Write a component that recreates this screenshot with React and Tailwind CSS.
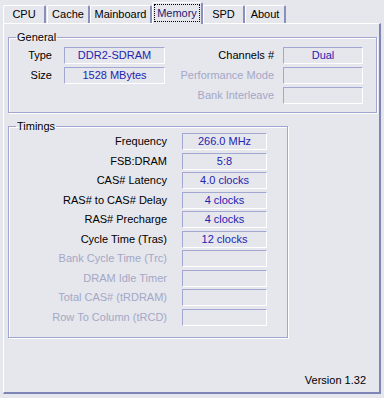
import React from 'react';

const Field = ({ value, w }) => (
    <div
        className={`${w} h-[17px] border-t border-l border-[#a3a8d2] border-r border-b border-r-white border-b-white flex items-center justify-center text-[#2424b0] leading-none`}
    >
        {value}
    </div>
);

const timings = [
    ['Frequency', '266.0 MHz'],
    ['FSB:DRAM', '5:8'],
    ['CAS# Latency', '4.0 clocks'],
    ['RAS# to CAS# Delay', '4 clocks'],
    ['RAS# Precharge', '4 clocks'],
    ['Cycle Time (Tras)', '12 clocks'],
    ['Bank Cycle Time (Trc)', null],
    ['DRAM Idle Timer', null],
    ['Total CAS# (tRDRAM)', null],
    ['Row To Column (tRCD)', null],
];

const App = () => {
    return (
        <div
            className="w-[384px] h-[398px] bg-[#e6e6ed] text-[11px] text-black overflow-hidden"
            style={{ fontFamily: '"Liberation Sans", Arial, sans-serif' }}
        >
            {/* tabs */}
            <div className="h-[23px] flex items-end pl-[3px]">
                <div className="w-[43px] h-[18px] border-t border-l border-white border-r-2 border-r-[#8a90bc] rounded-t-[2px] flex items-center justify-center">CPU</div>
                <div className="ml-[1px] w-[43px] h-[18px] border-t border-l border-white border-r-2 border-r-[#8a90bc] rounded-t-[2px] flex items-center justify-center">Cache</div>
                <div className="w-[62px] h-[18px] border-t border-l border-white border-r-2 border-r-[#8a90bc] rounded-t-[2px] flex items-center justify-center">Mainboard</div>
                <div className="relative z-10 -mb-px w-[51px] h-[22px] bg-[#e6e6ed] border-t border-l border-white border-r-2 border-r-[#8a90bc] rounded-t-[2px] flex items-start justify-center pt-[1px]">
                    <span className="border border-dotted border-black px-[2px] h-[18px] flex items-center text-[#1a1a70]">Memory</span>
                </div>
                <div className="w-[42px] h-[18px] border-t border-l border-white border-r-2 border-r-[#8a90bc] rounded-t-[2px] flex items-center justify-center">SPD</div>
                <div className="w-[41px] h-[18px] border-t border-l border-white border-r-2 border-r-[#8a90bc] rounded-t-[2px] flex items-center justify-center">About</div>
            </div>

            {/* panel */}
            <div className="ml-[3px] w-[378px] h-[371px] border-t border-l border-white border-r-2 border-b-2 border-r-[#7d84b6] border-b-[#7d84b6] flex flex-col pl-[4px]">
                <fieldset className="mt-[6px] w-[369px] border border-[#a0a6d0] shadow-[1px_1px_0_white,inset_1px_1px_0_white] pb-[8px]">
                    <legend className="ml-[7px] px-[1px] leading-[14px]">General</legend>
                    <div className="pt-[3px] flex flex-col gap-[3px]">
                        <div className="flex items-center">
                            <div className="w-[43px] text-right">Type</div>
                            <div className="ml-[12px]"><Field value="DDR2-SDRAM" w="w-[101px]" /></div>
                            <div className="w-[109px] text-right">Channels #</div>
                            <div className="ml-[9px]"><Field value="Dual" w="w-[80px]" /></div>
                        </div>
                        <div className="flex items-center">
                            <div className="w-[43px] text-right">Size</div>
                            <div className="ml-[12px]"><Field value="1528 MBytes" w="w-[101px]" /></div>
                            <div className="w-[109px] text-right text-[#a3a8c6]">Performance Mode</div>
                            <div className="ml-[9px]"><Field value="" w="w-[80px]" /></div>
                        </div>
                        <div className="flex items-center">
                            <div className="w-[265px] text-right text-[#a3a8c6]">Bank Interleave</div>
                            <div className="ml-[9px]"><Field value="" w="w-[80px]" /></div>
                        </div>
                    </div>
                </fieldset>

                <fieldset className="mt-[6px] w-[280px] border border-[#a0a6d0] shadow-[1px_1px_0_white,inset_1px_1px_0_white] pb-[11px]">
                    <legend className="ml-[7px] px-[1px] leading-[14px]">Timings</legend>
                    <div className="flex flex-col gap-[2.5px]">
                        {timings.map(([label, value]) => (
                            <div key={label} className="flex items-center">
                                <div className={`w-[158px] text-right ${value ? 'text-black' : 'text-[#a3a8c6]'}`}>{label}</div>
                                <div className="ml-[15px]"><Field value={value || ''} w="w-[85px]" /></div>
                            </div>
                        ))}
                    </div>
                </fieldset>

                <div className="mt-auto text-right pr-[13px] pb-[5px] leading-[13px]">Version 1.32</div>
            </div>
        </div>
    );
};

export default App;
